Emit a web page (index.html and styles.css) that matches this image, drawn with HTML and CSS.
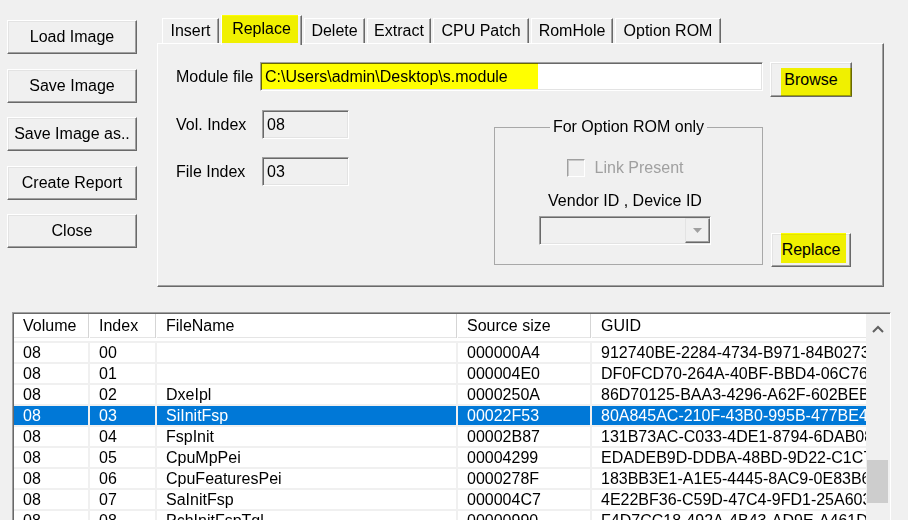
FILE: index.html
```html
<!DOCTYPE html>
<html>
<head>
<meta charset="utf-8">
<link rel="stylesheet" href="styles.css">
</head>
<body>
<div class="app">
  <div class="top">
    <div class="side">
      <button class="btn side-btn">Load Image</button>
      <button class="btn side-btn">Save Image</button>
      <button class="btn side-btn">Save Image as..</button>
      <button class="btn side-btn">Create Report</button>
      <button class="btn side-btn">Close</button>
    </div>
    <div class="tabctl">
      <div class="tabstrip">
        <div class="tab t-insert">Insert</div>
        <div class="tab sel t-replace">Replace</div>
        <div class="tab t-delete">Delete</div>
        <div class="tab t-extract">Extract</div>
        <div class="tab t-cpu">CPU Patch</div>
        <div class="tab t-romhole">RomHole</div>
        <div class="tab t-option">Option ROM</div>
      </div>
      <div class="panel">
        <div class="row1">
          <span class="lbl lbl-module">Module file</span>
          <div class="field path hl">C:\Users\admin\Desktop\s.module</div>
          <button class="btn browse hl">Browse</button>
        </div>
        <div class="row2">
          <div class="idxcol">
            <div class="idxrow"><span class="lbl lbl-idx">Vol. Index</span><div class="field ro">08</div></div>
            <div class="idxrow"><span class="lbl lbl-idx">File Index</span><div class="field ro">03</div></div>
          </div>
          <fieldset class="group">
            <legend align="center">For Option ROM only</legend>
            <div class="chkrow"><span class="chk"></span><span class="dis">Link Present</span></div>
            <div class="vendor">Vendor ID , Device ID</div>
            <div class="combo">
              <div class="combo-btn">
                <svg width="9" height="5" viewBox="0 0 9 5"><path d="M0 0H9L4.5 5Z" fill="#a0a0a0"/></svg>
              </div>
            </div>
          </fieldset>
          <button class="btn replace hl">Replace</button>
        </div>
      </div>
    </div>
  </div>

  <div class="list">
    <div class="list-main">
      <div class="lhead">
        <div class="hcell">Volume</div>
        <div class="hcell">Index</div>
        <div class="hcell">FileName</div>
        <div class="hcell">Source size</div>
        <div class="hcell">GUID</div>
      </div>
      <div class="lbody">
        <div class="row"><div class="cell">08</div><div class="cell">00</div><div class="cell"></div><div class="cell">000000A4</div><div class="cell">912740BE-2284-4734-B971-84B0273D3D3F</div></div>
        <div class="row"><div class="cell">08</div><div class="cell">01</div><div class="cell"></div><div class="cell">000004E0</div><div class="cell">DF0FCD70-264A-40BF-BBD4-06C76BB1B5A2</div></div>
        <div class="row"><div class="cell">08</div><div class="cell">02</div><div class="cell">DxeIpl</div><div class="cell">0000250A</div><div class="cell">86D70125-BAA3-4296-A62F-602BEBBB9081</div></div>
        <div class="row sel"><div class="cell">08</div><div class="cell">03</div><div class="cell">SiInitFsp</div><div class="cell">00022F53</div><div class="cell">80A845AC-210F-43B0-995B-477BE4E5F0F7</div></div>
        <div class="row"><div class="cell">08</div><div class="cell">04</div><div class="cell">FspInit</div><div class="cell">00002B87</div><div class="cell">131B73AC-C033-4DE1-8794-6DAB08E731CF</div></div>
        <div class="row"><div class="cell">08</div><div class="cell">05</div><div class="cell">CpuMpPei</div><div class="cell">00004299</div><div class="cell">EDADEB9D-DDBA-48BD-9D22-C1C7C89CE71D</div></div>
        <div class="row"><div class="cell">08</div><div class="cell">06</div><div class="cell">CpuFeaturesPei</div><div class="cell">0000278F</div><div class="cell">183BB3E1-A1E5-4445-8AC9-0E83B6A1E5B4</div></div>
        <div class="row"><div class="cell">08</div><div class="cell">07</div><div class="cell">SaInitFsp</div><div class="cell">000004C7</div><div class="cell">4E22BF36-C59D-47C4-9FD1-25A6033D0B12</div></div>
        <div class="row"><div class="cell">08</div><div class="cell">08</div><div class="cell">PchInitFspTgl</div><div class="cell">00000990</div><div class="cell">F4D7CC18-492A-4B43-AD9E-A461D1B0F2C6</div></div>
      </div>
    </div>
    <div class="vscroll">
      <div class="up">
        <svg width="12" height="8" viewBox="0 0 12 8"><polyline points="1,7 6,2 11,7" fill="none" stroke="#606060" stroke-width="2"/></svg>
      </div>
      <div class="thumb"></div>
    </div>
  </div>
</div>
</body>
</html>
```

FILE: styles.css
```css
html, body {
  margin: 0;
  height: 520px;
  overflow: hidden;
  background: #f0f0f0;
}
body {
  font-family: "Liberation Sans", Arial, sans-serif;
  font-size: 16px;
  color: #000;
}

.top {
  display: flex;
  align-items: flex-start;
}

/* left command buttons */
.side {
  display: flex;
  flex-direction: column;
  gap: 14.5px;
  margin-left: 7px;
  padding-top: 20px;
  width: 130px;
}

.btn {
  box-sizing: border-box;
  display: flex;
  align-items: center;
  justify-content: center;
  padding: 0;
  margin: 0;
  font: inherit;
  color: #000;
  background: #f0f0f0;
  border: 1px solid;
  border-color: #fff #696969 #696969 #fff;
  box-shadow: inset -1px -1px #a0a0a0, inset 1px 1px #e3e3e3;
}
.side-btn {
  width: 130px;
  height: 34px;
}

/* tab control */
.tabctl {
  margin-left: 20px;
  margin-top: 15px;
  width: 727px;
}
.tabstrip {
  display: flex;
  align-items: flex-end;
  height: 28px;
  padding-left: 5px;
}
.tab {
  box-sizing: border-box;
  height: 25px;
  display: flex;
  align-items: center;
  justify-content: center;
  margin-right: 2px;
  background: #f0f0f0;
  border-top: 1px solid #fff;
  border-left: 1px solid #fff;
  border-right: 1px solid #696969;
  box-shadow: inset -1px 0 #a0a0a0;
}
.tab.sel {
  position: relative;
  z-index: 1;
  height: 30px;
  margin-bottom: -2px;
  padding-bottom: 4px;
}
.tab.sel::after {
  content: "";
  position: absolute;
  left: 0;
  top: -1px;
  width: 76px;
  height: 28px;
  background: #ffff00;
  mix-blend-mode: multiply;
}
.t-insert { width: 57px; }
.t-replace { width: 81px; }
.t-delete { width: 61px; }
.t-extract { width: 64px; }
.t-cpu { width: 96px; }
.t-romhole { width: 82px; }
.t-option { width: 106px; }

.panel {
  box-sizing: border-box;
  height: 244px;
  border: 1px solid;
  border-color: #fff #696969 #696969 #fff;
  box-shadow: inset -1px -1px #a0a0a0;
  padding: 18px 0 0 18px;
}

.row1 {
  display: flex;
  align-items: flex-start;
}
.lbl {
  line-height: 29px;
  white-space: nowrap;
}
.lbl-module { width: 84px; }

.field {
  box-sizing: border-box;
  height: 29px;
  border: 1px solid;
  border-color: #a0a0a0 #fff #fff #a0a0a0;
  box-shadow: inset 1px 1px #696969, inset -1px -1px #e3e3e3;
  padding-left: 4px;
  line-height: 27px;
  background: #fff;
  white-space: nowrap;
}
.path { width: 503px; }

.hl { position: relative; }
.hl::after {
  content: "";
  position: absolute;
  background: #ffff00;
  mix-blend-mode: multiply;
}
.path::after {
  left: 0;
  top: 0;
  width: 277px;
  bottom: 1px;
}
.browse {
  width: 82px;
  height: 35px;
  margin-left: 7px;
}
.browse::after {
  left: 10px;
  top: 5px;
  right: -1px;
  bottom: 0;
}

.row2 {
  display: flex;
  align-items: flex-start;
  margin-top: 13px;
}
.idxcol { width: 318px; }
.idxrow { display: flex; }
.idxrow + .idxrow { margin-top: 18px; }
.lbl-idx { width: 86px; }
.ro {
  width: 87px;
  background: #f0f0f0;
}

.group {
  box-sizing: border-box;
  margin: 8px 0 0;
  padding: 0;
  min-width: 0;
  width: 269px;
  height: 147px;
  border: 1px solid #a8a8a8;
  display: flex;
  flex-direction: column;
  align-items: center;
}
.group legend {
  padding: 0 3px;
  margin: 0 auto;
  line-height: 18px;
}
.chkrow {
  display: flex;
  align-items: center;
  height: 19px;
  margin-top: 22px;
  margin-right: 7px;
}
.chk {
  box-sizing: border-box;
  width: 18px;
  height: 18px;
  border: 1px solid;
  border-color: #a0a0a0 #fff #fff #a0a0a0;
  box-shadow: inset 1px 1px #c8c8c8;
  background: #f0f0f0;
  margin-right: 10px;
}
.dis { color: #a0a0a0; }
.vendor {
  margin-top: 15px;
  margin-right: 7px;
  line-height: 18px;
}
.combo {
  box-sizing: border-box;
  margin-top: 6px;
  margin-right: 7px;
  width: 172px;
  height: 29px;
  border: 1px solid;
  border-color: #a0a0a0 #fff #fff #a0a0a0;
  box-shadow: inset 1px 1px #696969, inset -1px -1px #e3e3e3;
  background: #f0f0f0;
  display: flex;
  align-items: center;
  justify-content: flex-end;
}
.combo-btn {
  box-sizing: border-box;
  width: 25px;
  height: 25px;
  border: 1px solid;
  border-color: #e3e3e3 #696969 #696969 #e3e3e3;
  box-shadow: inset -1px -1px #a0a0a0;
  display: flex;
  align-items: center;
  justify-content: center;
}

.replace {
  width: 80px;
  height: 34px;
  margin-left: 8px;
  margin-top: 123px;
}
.replace::after {
  left: 9px;
  top: -1px;
  width: 65px;
  height: 30px;
}

/* list view */
.list {
  box-sizing: border-box;
  margin: 25px 0 0 12px;
  width: 879px;
  height: 230px;
  border: 1px solid;
  border-color: #a0a0a0 #fff #fff #a0a0a0;
  box-shadow: inset 1px 1px #696969;
  padding: 1px 0 0 1px;
  display: flex;
  background: #fff;
}
.list-main {
  flex: 1;
  min-width: 0;
  overflow: hidden;
  background: #fff;
}
.lhead, .row {
  display: grid;
  grid-template-columns: 74px 65px 299px 132px 320px;
  column-gap: 2px;
}
.lhead {
  height: 24px;
  padding-bottom: 3px;
  background: #fff;
}
.hcell {
  padding-left: 9px;
  line-height: 23px;
  border-bottom: 1px solid #e5e5e5;
  box-shadow: 1px 0 #d5d5d5;
  white-space: nowrap;
}
.lbody {
  background: #f0f0f0;
  padding-top: 2px;
  display: flex;
  flex-direction: column;
  gap: 2px;
}
.row { height: 19px; }
.cell {
  background: #fff;
  padding-left: 9px;
  line-height: 19px;
  white-space: nowrap;
  overflow: hidden;
}
.row.sel .cell {
  background: #0078d7;
  color: #fff;
}

.vscroll {
  width: 24px;
  background: #f0f0f0;
  display: flex;
  flex-direction: column;
}
.up {
  height: 30px;
  display: flex;
  align-items: center;
  justify-content: center;
}
.thumb {
  margin: 116px 0 0 1px;
  width: 21px;
  height: 43px;
  background: #cdcdcd;
}
```
